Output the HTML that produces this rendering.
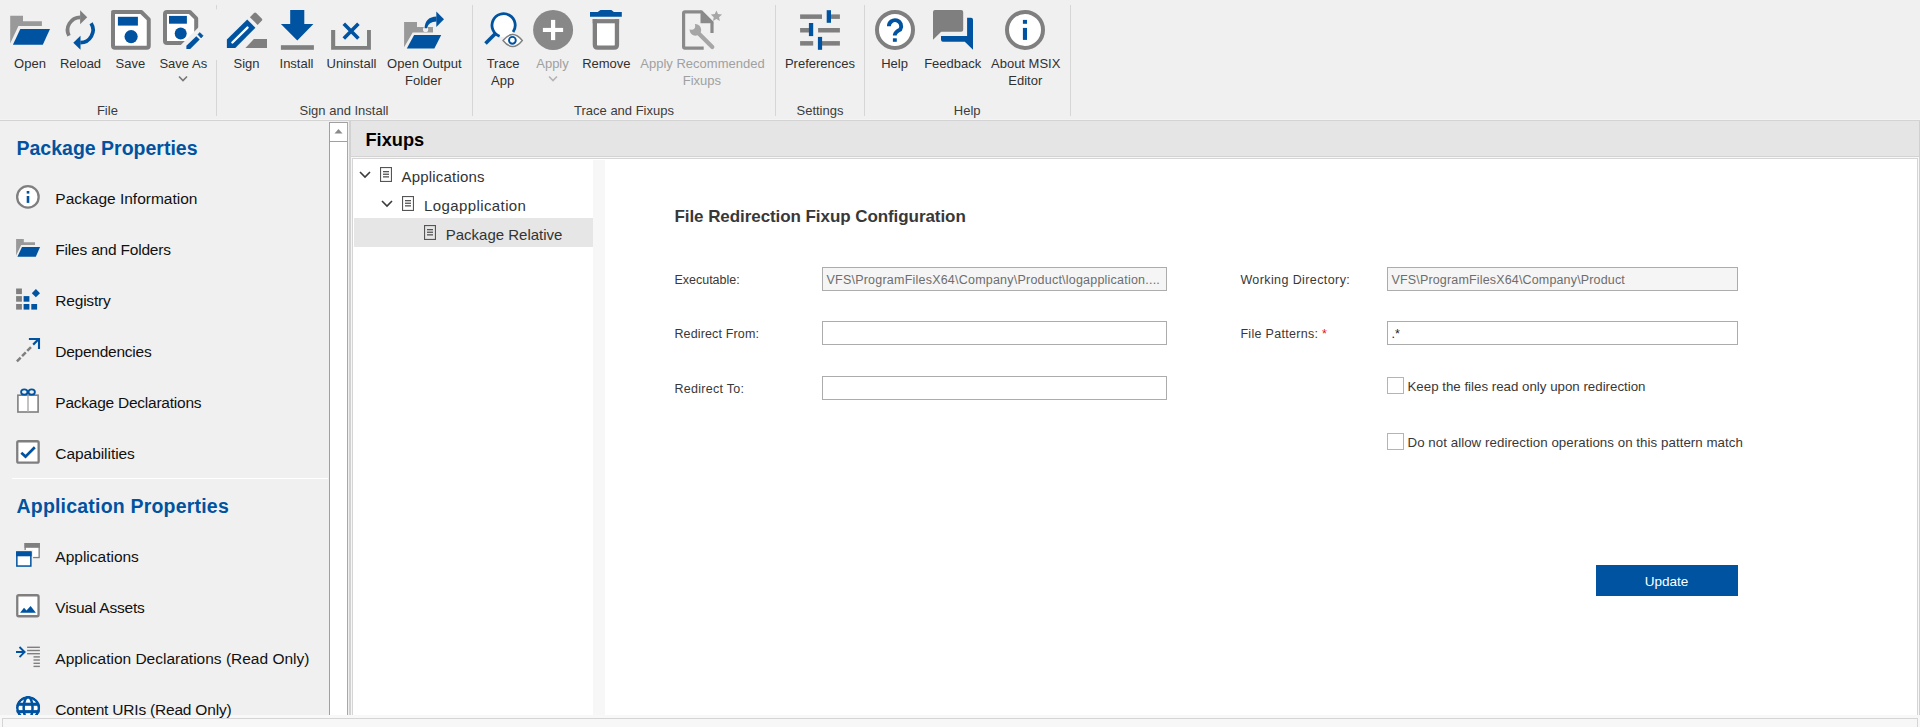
<!DOCTYPE html>
<html><head><meta charset="utf-8"><style>
html,body{margin:0;padding:0;width:1920px;height:727px;overflow:hidden;background:#f0f0f0;}
body{position:relative;font-family:"Liberation Sans",sans-serif;}
.a{position:absolute;}
.t{position:absolute;white-space:nowrap;}
</style></head><body>
<div class="a" style="left:0px;top:0px;width:1920px;height:727px;background:#f0f0f0;"></div>
<div class="a" style="left:0px;top:120px;width:1920px;height:1px;background:#d3d3d3;"></div>
<div class="a" style="left:0px;top:119px;width:1920px;height:1px;background:#f4f4f4;"></div>
<div class="a" style="left:12px;top:478px;width:316px;height:1px;background:#ffffff;"></div>
<div class="a" style="left:329px;top:122px;width:1px;height:593px;background:#a0a0a0;"></div>
<div class="a" style="left:330px;top:122px;width:17px;height:593px;background:#ffffff;"></div>
<div class="a" style="left:329px;top:122px;width:19px;height:1px;background:#a0a0a0;"></div>
<div class="a" style="left:330px;top:141px;width:17px;height:1px;background:#a0a0a0;"></div>
<div class="a" style="left:347px;top:122px;width:1px;height:593px;background:#a8a8a8;"></div>
<div class="a" style="left:348px;top:121px;width:1px;height:594px;background:#f0f0f0;"></div>
<div class="a" style="left:349px;top:121px;width:2px;height:594px;background:#d2d2d2;"></div>
<div class="a" style="left:351px;top:157px;width:1px;height:558px;background:#f6f6f6;"></div>
<div class="a" style="left:352px;top:158px;width:1px;height:557px;background:#d5d5d5;"></div>
<div class="a" style="left:351px;top:121px;width:1568px;height:35px;background:#e5e5e5;"></div>
<div class="a" style="left:349px;top:156px;width:1570px;height:1px;background:#d3d3d3;"></div>
<div class="a" style="left:351px;top:157px;width:1568px;height:1px;background:#f8f8f8;"></div>
<div class="a" style="left:352px;top:158px;width:1566px;height:1px;background:#d5d5d5;"></div>
<div class="a" style="left:353px;top:159px;width:1564px;height:556px;background:#ffffff;"></div>
<div class="a" style="left:593px;top:160px;width:12px;height:555px;background:#f7f7f7;"></div>
<div class="a" style="left:1917px;top:158px;width:1px;height:557px;background:#d5d5d5;"></div>
<div class="a" style="left:1918px;top:157px;width:1px;height:558px;background:#f8f8f8;"></div>
<div class="a" style="left:1919px;top:121px;width:1px;height:594px;background:#d0d0d0;"></div>
<div class="a" style="left:0px;top:715px;width:1920px;height:12px;background:#f8f8f8;"></div>
<div class="a" style="left:2px;top:718px;width:1915px;height:1px;background:#d5d5d5;"></div>
<div class="a" style="left:2px;top:718px;width:1px;height:9px;background:#d5d5d5;"></div>
<div class="a" style="left:1917px;top:718px;width:1px;height:9px;background:#d5d5d5;"></div>
<div class="a" style="left:3px;top:719px;width:1914px;height:8px;background:#f7f7f7;"></div>
<svg class="a" style="left:333px;top:126px" width="11" height="10" viewBox="0 0 11 10"><path d="M1.5 7.5 L5.5 3 L9.5 7.5 Z" fill="#8a8a8a"/></svg>
<div class="a" style="left:216px;top:5px;width:1px;height:111px;background:#d6d6d6;"></div>
<div class="a" style="left:472px;top:5px;width:1px;height:111px;background:#d6d6d6;"></div>
<div class="a" style="left:775px;top:5px;width:1px;height:111px;background:#d6d6d6;"></div>
<div class="a" style="left:864px;top:5px;width:1px;height:111px;background:#d6d6d6;"></div>
<div class="a" style="left:1070px;top:5px;width:1px;height:111px;background:#d6d6d6;"></div>
<div class="t" style="top:55.00px;font-size:13px;line-height:17px;color:#303030;left:-470px;width:1000px;text-align:center;">Open</div>
<div class="t" style="top:55.00px;font-size:13px;line-height:17px;color:#303030;left:-419.5px;width:1000px;text-align:center;">Reload</div>
<div class="t" style="top:55.00px;font-size:13px;line-height:17px;color:#303030;left:-369.7px;width:1000px;text-align:center;">Save</div>
<div class="t" style="top:55.00px;font-size:13px;line-height:17px;color:#303030;left:-316.7px;width:1000px;text-align:center;">Save As</div>
<div class="t" style="top:55.00px;font-size:13px;line-height:17px;color:#303030;left:-253.5px;width:1000px;text-align:center;">Sign</div>
<div class="t" style="top:55.00px;font-size:13px;line-height:17px;color:#303030;left:-203.5px;width:1000px;text-align:center;">Install</div>
<div class="t" style="top:55.00px;font-size:13px;line-height:17px;color:#303030;left:-148.5px;width:1000px;text-align:center;">Uninstall</div>
<div class="t" style="top:55.00px;font-size:13px;line-height:17px;color:#303030;left:-75.69999999999999px;width:1000px;text-align:center;">Open Output</div>
<div class="t" style="top:72.00px;font-size:13px;line-height:17px;color:#303030;left:-76.60000000000002px;width:1000px;text-align:center;">Folder</div>
<div class="t" style="top:55.00px;font-size:13px;line-height:17px;color:#303030;left:3px;width:1000px;text-align:center;">Trace</div>
<div class="t" style="top:72.00px;font-size:13px;line-height:17px;color:#303030;left:2.6999999999999886px;width:1000px;text-align:center;">App</div>
<div class="t" style="top:55.00px;font-size:13px;line-height:17px;color:#a0a0a0;left:52.5px;width:1000px;text-align:center;">Apply</div>
<div class="t" style="top:55.00px;font-size:13px;line-height:17px;color:#303030;left:106.39999999999998px;width:1000px;text-align:center;">Remove</div>
<div class="t" style="top:55.00px;font-size:13px;line-height:17px;color:#a0a0a0;left:202.5px;width:1000px;text-align:center;">Apply Recommended</div>
<div class="t" style="top:72.00px;font-size:13px;line-height:17px;color:#a0a0a0;left:201.89999999999998px;width:1000px;text-align:center;">Fixups</div>
<div class="t" style="top:55.00px;font-size:13px;line-height:17px;color:#303030;left:320px;width:1000px;text-align:center;">Preferences</div>
<div class="t" style="top:55.00px;font-size:13px;line-height:17px;color:#303030;left:394.5px;width:1000px;text-align:center;">Help</div>
<div class="t" style="top:55.00px;font-size:13px;line-height:17px;color:#303030;left:452.70000000000005px;width:1000px;text-align:center;">Feedback</div>
<div class="t" style="top:55.00px;font-size:13px;line-height:17px;color:#303030;left:525.7px;width:1000px;text-align:center;">About MSIX</div>
<div class="t" style="top:72.00px;font-size:13px;line-height:17px;color:#303030;left:525.3px;width:1000px;text-align:center;">Editor</div>
<div class="t" style="top:101.50px;font-size:13px;line-height:17px;color:#3c3c3c;left:-392.6px;width:1000px;text-align:center;">File</div>
<div class="t" style="top:101.50px;font-size:13px;line-height:17px;color:#3c3c3c;left:-156px;width:1000px;text-align:center;">Sign and Install</div>
<div class="t" style="top:101.50px;font-size:13px;line-height:17px;color:#3c3c3c;left:124px;width:1000px;text-align:center;">Trace and Fixups</div>
<div class="t" style="top:101.50px;font-size:13px;line-height:17px;color:#3c3c3c;left:320px;width:1000px;text-align:center;">Settings</div>
<div class="t" style="top:101.50px;font-size:13px;line-height:17px;color:#3c3c3c;left:467.20000000000005px;width:1000px;text-align:center;">Help</div>
<svg class="a" style="left:178px;top:75px" width="10" height="7" viewBox="0 0 10 7"><path d="M1 1.5 L5 5.5 L9 1.5" fill="none" stroke="#777" stroke-width="1.6"/></svg>
<svg class="a" style="left:548px;top:75px" width="10" height="7" viewBox="0 0 10 7"><path d="M1 1.5 L5 5.5 L9 1.5" fill="none" stroke="#b4b4b4" stroke-width="1.6"/></svg>
<div class="t" style="top:135.84px;font-size:19.5px;line-height:25px;color:#0053a0;font-weight:bold;left:16.5px;">Package Properties</div>
<div class="t" style="top:493.94px;font-size:19.5px;line-height:25px;color:#0053a0;font-weight:bold;letter-spacing:0.2px;left:16.5px;">Application Properties</div>
<div class="t" style="top:188.63px;font-size:15.5px;line-height:20px;color:#111111;left:55.3px;">Package Information</div>
<div class="t" style="top:239.63px;font-size:15.5px;line-height:20px;color:#111111;letter-spacing:-0.2px;left:55.3px;">Files and Folders</div>
<div class="t" style="top:290.63px;font-size:15.5px;line-height:20px;color:#111111;letter-spacing:-0.2px;left:55.3px;">Registry</div>
<div class="t" style="top:341.63px;font-size:15.5px;line-height:20px;color:#111111;letter-spacing:-0.25px;left:55.3px;">Dependencies</div>
<div class="t" style="top:392.63px;font-size:15.5px;line-height:20px;color:#111111;letter-spacing:-0.24px;left:55.3px;">Package Declarations</div>
<div class="t" style="top:443.63px;font-size:15.5px;line-height:20px;color:#111111;letter-spacing:-0.05px;left:55.3px;">Capabilities</div>
<div class="t" style="top:547.13px;font-size:15.5px;line-height:20px;color:#111111;left:55.3px;">Applications</div>
<div class="t" style="top:598.13px;font-size:15.5px;line-height:20px;color:#111111;letter-spacing:-0.2px;left:55.3px;">Visual Assets</div>
<div class="t" style="top:649.13px;font-size:15.5px;line-height:20px;color:#111111;left:55.3px;">Application Declarations (Read Only)</div>
<div class="t" style="top:700.13px;font-size:15.5px;line-height:20px;color:#111111;letter-spacing:-0.2px;left:55.3px;">Content URIs (Read Only)</div>
<div class="t" style="top:127.69px;font-size:18.2px;line-height:24px;color:#000;font-weight:bold;left:365.5px;">Fixups</div>
<div class="a" style="left:354px;top:218px;width:239px;height:29px;background:#e6e6e6;"></div>
<div class="t" style="top:166.60px;font-size:15px;line-height:20px;color:#333333;letter-spacing:0.2px;left:401.5px;">Applications</div>
<div class="t" style="top:195.60px;font-size:15px;line-height:20px;color:#333333;letter-spacing:0.4px;left:424px;">Logapplication</div>
<div class="t" style="top:224.50px;font-size:15px;line-height:20px;color:#333333;left:445.7px;">Package Relative</div>
<svg class="a" style="left:359px;top:171px" width="12" height="8" viewBox="0 0 12 8"><path d="M1 1 L6 6 L11 1" fill="none" stroke="#3a3a3a" stroke-width="1.6"/></svg>
<svg class="a" style="left:381px;top:200px" width="12" height="8" viewBox="0 0 12 8"><path d="M1 1 L6 6 L11 1" fill="none" stroke="#3a3a3a" stroke-width="1.6"/></svg>
<svg class="a" style="left:380px;top:166.5px" width="12" height="15" viewBox="0 0 12 15"><rect x="0.5" y="0.5" width="11" height="14" fill="none" stroke="#555" stroke-width="1.2"/><rect x="3" y="4" width="6" height="1.3" fill="#555"/><rect x="3" y="6.6" width="6" height="1.3" fill="#555"/><rect x="3" y="9.2" width="6" height="1.3" fill="#555"/></svg>
<svg class="a" style="left:402px;top:195.5px" width="12" height="15" viewBox="0 0 12 15"><rect x="0.5" y="0.5" width="11" height="14" fill="none" stroke="#555" stroke-width="1.2"/><rect x="3" y="4" width="6" height="1.3" fill="#555"/><rect x="3" y="6.6" width="6" height="1.3" fill="#555"/><rect x="3" y="9.2" width="6" height="1.3" fill="#555"/></svg>
<svg class="a" style="left:424px;top:224.5px" width="12" height="15" viewBox="0 0 12 15"><rect x="0.5" y="0.5" width="11" height="14" fill="none" stroke="#555" stroke-width="1.2"/><rect x="3" y="4" width="6" height="1.3" fill="#555"/><rect x="3" y="6.6" width="6" height="1.3" fill="#555"/><rect x="3" y="9.2" width="6" height="1.3" fill="#555"/></svg>
<div class="t" style="top:205.81px;font-size:17px;line-height:22px;color:#383838;font-weight:bold;letter-spacing:-0.07px;left:674.5px;">File Redirection Fixup Configuration</div>
<div class="t" style="top:271.67px;font-size:12.5px;line-height:16px;color:#383838;left:674.4px;">Executable:</div>
<div class="t" style="top:325.67px;font-size:12.5px;line-height:16px;color:#383838;letter-spacing:0.15px;left:674.4px;">Redirect From:</div>
<div class="t" style="top:380.67px;font-size:12.5px;line-height:16px;color:#383838;letter-spacing:0.28px;left:674.4px;">Redirect To:</div>
<div class="t" style="top:271.67px;font-size:12.5px;line-height:16px;color:#383838;letter-spacing:0.4px;left:1240.4px;">Working Directory:</div>
<div class="t" style="top:325.67px;font-size:12.5px;line-height:16px;color:#383838;letter-spacing:0.3px;left:1240.4px;">File Patterns: <span style="color:#e81123">*</span></div>
<div class="a" style="left:822px;top:267px;width:345px;height:24px;background:#f5f5f5;border:1px solid #acacac;box-sizing:border-box;"></div>
<div class="t" style="top:271.87px;font-size:12.5px;line-height:16px;color:#6d6d6d;letter-spacing:0.22px;left:826.5px;">VFS\ProgramFilesX64\Company\Product\logapplication....</div>
<div class="a" style="left:822px;top:321px;width:345px;height:24px;background:#ffffff;border:1px solid #acacac;box-sizing:border-box;"></div>
<div class="a" style="left:822px;top:376px;width:345px;height:24px;background:#ffffff;border:1px solid #acacac;box-sizing:border-box;"></div>
<div class="a" style="left:1387px;top:267px;width:351px;height:24px;background:#f5f5f5;border:1px solid #acacac;box-sizing:border-box;"></div>
<div class="t" style="top:271.87px;font-size:12.5px;line-height:16px;color:#6d6d6d;letter-spacing:0.16px;left:1391.5px;">VFS\ProgramFilesX64\Company\Product</div>
<div class="a" style="left:1387px;top:321px;width:351px;height:24px;background:#ffffff;border:1px solid #acacac;box-sizing:border-box;"></div>
<div class="t" style="top:325.87px;font-size:12.5px;line-height:16px;color:#222;left:1391.5px;">.*</div>
<div class="a" style="left:1387px;top:377px;width:17px;height:17px;background:#ffffff;border:1.5px solid #b4b4b4;box-sizing:border-box;"></div>
<div class="a" style="left:1387px;top:433px;width:17px;height:17px;background:#ffffff;border:1.5px solid #b4b4b4;box-sizing:border-box;"></div>
<div class="t" style="top:377.89px;font-size:13.3px;line-height:17px;color:#383838;left:1407.5px;">Keep the files read only upon redirection</div>
<div class="t" style="top:433.89px;font-size:13.3px;line-height:17px;color:#383838;letter-spacing:0.05px;left:1407.5px;">Do not allow redirection operations on this pattern match</div>
<div class="a" style="left:1596px;top:565px;width:142px;height:31px;background:#0053a0;"></div>
<div class="t" style="top:573.02px;font-size:13.5px;line-height:18px;color:#ffffff;left:1166.5px;width:1000px;text-align:center;">Update</div>
<svg class="a" style="left:0;top:0" width="1920" height="715" viewBox="0 0 1920 715"><path d="M10.2 15.7 H23 V21.2 H41.9 V26 H18.4 L10.2 43.5 Z" fill="#999999"/><path d="M20.3 28.9 H50 L42.8 44.8 H12.9 Z" fill="#0053a0"/><path d="M68.98 35.77 A12.7 12.7 0 0 1 80.30 17.30" fill="none" stroke="#7f7f7f" stroke-width="3.7"/><path d="M80.1 10.2 L87.2 17.3 L80.1 24.2 Z" fill="#7f7f7f"/><path d="M91.07 23.27 A12.7 12.7 0 0 1 80.30 42.70" fill="none" stroke="#0053a0" stroke-width="3.7"/><path d="M80.5 35.8 L73.3 42.7 L80.5 49.7 Z" fill="#0053a0"/><path d="M113 12 H141.3 L148.75 19.45 V45.85 Q148.75 47.85 146.75 47.85 H115 Q113 47.85 113 45.85 V14 Q113 12 115 12 Z" fill="#fff" stroke="#7f7f7f" stroke-width="4" stroke-linejoin="round"/><rect x="117.9" y="16.8" width="20" height="8.8" fill="#0053a0"/><circle cx="131.1" cy="36.6" r="6.6" fill="#0053a0"/><path d="M167 12 H189.8 L196.2 18.4 V40.9 Q196.2 42.9 194.2 42.9 H167 Q165 42.9 165 40.9 V14 Q165 12 167 12 Z" fill="#fff" stroke="#7f7f7f" stroke-width="4" stroke-linejoin="round"/><rect x="169" y="15.9" width="17.9" height="7.8" fill="#0053a0"/><circle cx="180.7" cy="33.5" r="6" fill="#0053a0"/><path d="M220.8 5 H230 V60 H165.8 Z" fill="#f0f0f0"/><path d="M186.4 48.9 V45.8 L196.3 36.2 L199.7 39.4 L190.2 48.9 Z" fill="#0053a0"/><path d="M197.9 34.4 L199.9 32.6 L203.1 35.8 L201.1 38 Z" fill="#0053a0" stroke="#0053a0" stroke-width="0.6" stroke-linejoin="round"/><path d="M226.9 48 V39.4 L247.2 19.4 L255.4 27.8 L235.3 48 Z" fill="#0053a0"/><path d="M232.4 42.5 L247.5 27.6" stroke="#fff" stroke-width="2.4" stroke-linecap="round"/><path d="M249.9 17.2 L254 13.1 Q255.1 12 256.2 13.1 L261.7 18.6 Q262.8 19.7 261.7 20.8 L257.6 24.9 Z" fill="#7f7f7f"/><path d="M245.4 48 L253.9 39 H267 V48 Z" fill="#7f7f7f"/><path d="M290.2 10 H304.3 V24.1 H313.4 L297.3 40.4 L280.9 24.1 H290.2 Z" fill="#0053a0"/><rect x="280.9" y="45.2" width="33" height="4.6" fill="#7f7f7f"/><path d="M331.1 29.9 H335.2 V46 H367 V29.9 H370.9 V49.8 H331.1 Z" fill="#7f7f7f"/><path d="M343.8 23.8 L358.4 38.4 M358.4 23.8 L343.8 38.4" stroke="#0053a0" stroke-width="3.6"/><path d="M404.1 22.1 H417 V27 H433 V32.5 H412.7 L404.1 47.3 Z" fill="#999999"/><circle cx="425.6" cy="29.4" r="2.6" fill="#f0f0f0"/><path d="M414.1 35.1 H441.2 L434.4 48.5 H406.8 Z" fill="#0053a0"/><path d="M424.6 28.3 Q425 17 436.5 16.6 V21.6 Q428.5 21.6 426.9 28.3 Z" fill="#0053a0"/><path d="M436.3 11.5 L444 19.3 L436.3 27.1 Z" fill="#0053a0"/><circle cx="503.6" cy="25.3" r="11.6" fill="#fff"/><path d="M513.10 31.95 A11.6 11.6 0 1 0 499.63 36.20" fill="none" stroke="#0053a0" stroke-width="2.8"/><path d="M485.5 43.4 L495.2 33.7" stroke="#0053a0" stroke-width="3.6"/><path d="M503 40.5 Q512.6 28.4 522.3 40.5 Q512.6 52.6 503 40.5 Z" fill="#fff" stroke="#7f7f7f" stroke-width="1.4"/><circle cx="512.4" cy="40.3" r="3.4" fill="none" stroke="#0053a0" stroke-width="1.9"/><circle cx="553.1" cy="29.9" r="20" fill="#888888"/><rect x="542.9" y="27.9" width="20.2" height="4.1" fill="#fff"/><rect x="551" y="19.9" width="4.2" height="20.2" fill="#fff"/><path d="M590 12.1 H597.7 L600.5 10 H611.4 L613.9 12.1 H621.8 V16.7 H590 Z" fill="#0053a0"/><path d="M594.85 19.1 V44.8 Q594.85 47.6 597.6 47.6 H614.2 Q616.95 47.6 616.95 44.8 V19.1" fill="#fff" stroke="#7f7f7f" stroke-width="4.3"/><rect x="592.7" y="19.1" width="26.4" height="4.2" fill="#7f7f7f"/><path d="M703.7 48.2 H685 Q683.6 48.2 683.6 46.8 V13.2 Q683.6 11.8 685 11.8 H701.4 L712 22.3 V33" fill="none" stroke="#8a8a8a" stroke-width="3.2"/><path d="M700.5 10.2 L713.6 23.3 H700.5 Z" fill="#8a8a8a"/><polygon points="716.40,10.40 718.05,14.03 722.01,14.48 719.06,17.17 719.87,21.07 716.40,19.10 712.93,21.07 713.74,17.17 710.79,14.48 714.75,14.03" fill="#a6a6a6"/><path d="M697.5 32.3 L712.3 47.1" stroke="#a6a6a6" stroke-width="4.2" stroke-linecap="round"/><circle cx="695.4" cy="29.9" r="5.8" fill="#a6a6a6"/><circle cx="691.5" cy="26" r="3.7" fill="#f0f0f0"/><rect x="800.1" y="14.4" width="21.9" height="4.5" fill="#7f7f7f"/><rect x="831" y="14.4" width="8.9" height="4.5" fill="#7f7f7f"/><rect x="800.1" y="28" width="8.9" height="4.5" fill="#7f7f7f"/><rect x="818.1" y="28" width="21.8" height="4.5" fill="#7f7f7f"/><rect x="800.1" y="41.1" width="13.1" height="4.5" fill="#7f7f7f"/><rect x="822" y="41.1" width="17.9" height="4.5" fill="#7f7f7f"/><rect x="826.7" y="10.2" width="4.3" height="12.6" fill="#0053a0"/><rect x="808.9" y="23" width="4.3" height="13.1" fill="#0053a0"/><rect x="817.9" y="36.9" width="4.2" height="12.9" fill="#0053a0"/><circle cx="895" cy="29.9" r="18" fill="#fff" stroke="#7f7f7f" stroke-width="4"/><path d="M888.9 26.3 A6.15 6.15 0 1 1 900.3 29.5 Q895.2 32.2 894.85 34.8 V35.6" fill="none" stroke="#0053a0" stroke-width="3.9"/><rect x="892.9" y="38.3" width="3.9" height="3.5" fill="#0053a0"/><path d="M935 10 H961.2 Q963.2 10 963.2 12 V29.8 Q963.2 31.8 961.2 31.8 H941.2 L933 39.7 V12 Q933 10 935 10 Z" fill="#7f7f7f"/><path d="M967.1 17.7 H971 Q973 17.7 973 19.7 V49.8 L964.8 41.8 H943 Q941 41.8 941 39.8 V36 H967.1 Z" fill="#0053a0"/><circle cx="1025" cy="29.9" r="18" fill="#fff" stroke="#7f7f7f" stroke-width="4"/><rect x="1022.9" y="19.9" width="4.1" height="3.9" fill="#0053a0"/><rect x="1022.9" y="27.9" width="4.1" height="12" fill="#0053a0"/><circle cx="27.9" cy="196.9" r="10.75" fill="#fff" stroke="#7f7f7f" stroke-width="2.3"/><rect x="26.7" y="191" width="2.6" height="2.6" fill="#0053a0"/><rect x="26.7" y="196" width="2.6" height="6.9" fill="#0053a0"/><path d="M16.1 239 H23.8 V242.2 H35 V245 H21.2 L16.1 255.5 Z" fill="#999999"/><path d="M22 246.9 H40.1 L35.8 256.7 H17.4 Z" fill="#0053a0"/><rect x="16.1" y="288.5" width="5.8" height="5.6" fill="#7f7f7f"/><rect x="16.1" y="296.1" width="5.8" height="5.6" fill="#7f7f7f"/><rect x="16.1" y="304" width="5.8" height="5.6" fill="#7f7f7f"/><rect x="23.6" y="296.1" width="5.8" height="5.6" fill="#0053a0"/><rect x="23.6" y="304" width="5.8" height="5.6" fill="#0053a0"/><rect x="31.3" y="304" width="5.8" height="5.6" fill="#0053a0"/><path d="M35.9 289.1 L40 293.2 L35.9 297.3 L31.8 293.2 Z" fill="#0053a0"/><path d="M16.9 361.3 L32.2 346" stroke="#7f7f7f" stroke-width="2.5" stroke-dasharray="5.3 2.0"/><path d="M33.2 344.6 L38.5 339.3" stroke="#0053a0" stroke-width="2.2"/><path d="M28.9 339 H39 V348.9" fill="none" stroke="#0053a0" stroke-width="2.1"/><rect x="17.9" y="395.2" width="20.2" height="16.8" fill="#fff" stroke="#7f7f7f" stroke-width="1.6"/><rect x="27.3" y="395.2" width="1.4" height="16.8" fill="#aaaaaa"/><ellipse cx="24.3" cy="392" rx="3.2" ry="2.6" fill="none" stroke="#0053a0" stroke-width="1.8"/><ellipse cx="31.7" cy="392" rx="3.2" ry="2.6" fill="none" stroke="#0053a0" stroke-width="1.8"/><rect x="17.25" y="441.25" width="21.4" height="21.4" rx="1.5" fill="#fff" stroke="#7f7f7f" stroke-width="2.3"/><path d="M21.3 452.7 L25.5 456.6 L34.8 447.2" fill="none" stroke="#0053a0" stroke-width="2.7"/><rect x="25.15" y="543.65" width="14" height="13.9" fill="#fff" stroke="#7f7f7f" stroke-width="1.3"/><rect x="24.5" y="543" width="15.3" height="4.8" fill="#7f7f7f"/><rect x="14.6" y="550" width="18.5" height="18.3" fill="#f0f0f0"/><rect x="16.85" y="552.15" width="14" height="13.9" fill="#fff" stroke="#0053a0" stroke-width="1.5"/><rect x="16.1" y="551.4" width="15.5" height="4.9" fill="#0053a0"/><rect x="17.25" y="595.25" width="21.3" height="21" rx="1.5" fill="#fff" stroke="#7f7f7f" stroke-width="2.3"/><path d="M20.1 612.7 L24 607.7 L26.5 610.4 L30.6 605.9 L35.9 612.7 Z" fill="#0053a0"/><path d="M16 652 H24.8 M19.5 647 L24.6 652 L19.5 657.1" fill="none" stroke="#0053a0" stroke-width="1.9"/><rect x="27.1" y="646.5999999999999" width="12.8" height="1.4" fill="#7f7f7f"/><rect x="27.1" y="649.8" width="12.8" height="1.4" fill="#7f7f7f"/><rect x="27.1" y="653.0" width="12.8" height="1.4" fill="#7f7f7f"/><rect x="33.5" y="656.1999999999999" width="6.4" height="1.4" fill="#7f7f7f"/><rect x="33.5" y="659.3" width="6.4" height="1.4" fill="#7f7f7f"/><rect x="33.5" y="662.5999999999999" width="6.4" height="1.4" fill="#7f7f7f"/><rect x="33.5" y="665.6999999999999" width="6.4" height="1.4" fill="#7f7f7f"/><clipPath id="gclip"><circle cx="28.1" cy="708" r="12.1"/></clipPath><g clip-path="url(#gclip)"><circle cx="28.1" cy="708" r="10.85" fill="#fff" stroke="#0053a0" stroke-width="2.5"/><ellipse cx="28.1" cy="708" rx="4.45" ry="11" fill="none" stroke="#0053a0" stroke-width="2.5"/><rect x="16" y="702.7" width="24.2" height="3.1" fill="#0053a0"/><rect x="16" y="710.1" width="24.2" height="3.1" fill="#0053a0"/></g></svg>
</body></html>
